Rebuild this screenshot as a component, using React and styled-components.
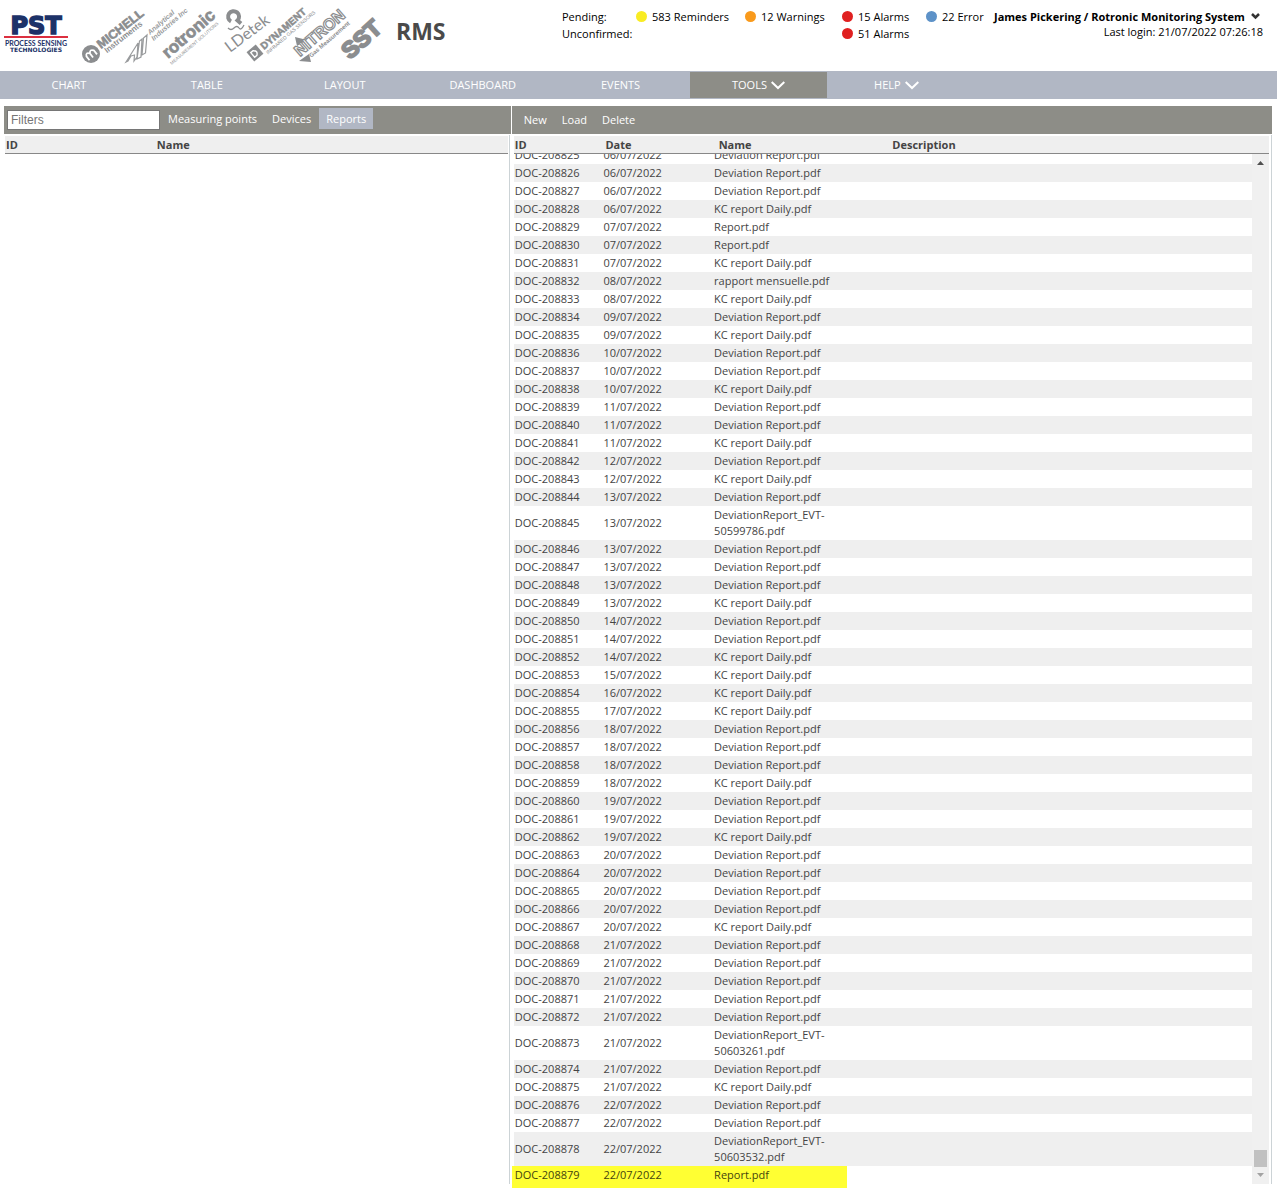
import React, { useEffect, useRef, useState } from "react";
import styled, { createGlobalStyle } from "styled-components";

const GlobalStyle = createGlobalStyle`
  * {
    box-sizing: border-box;
  }
  body {
    margin: 0;
    background: #fff;
    color: #444;
    font-family: "Open Sans", "Noto Sans", sans-serif;
    font-size: 11px;
  }
  button, input {
    font: inherit;
  }
`;

const Page = styled.div`
  display: flex;
  flex-direction: column;
  height: 100vh;
`;

const Header = styled.header`
  display: flex;
  align-items: flex-start;
  height: 71px;
  padding: 0 14px 0 4px;
  color: #000;
`;

const Brand = styled.div`
  display: flex;
  align-items: flex-start;
`;

const AppName = styled.h1`
  margin: 15px 0 0 8px;
  font-size: 23px;
  line-height: 32px;
  font-weight: 700;
  color: #4a4a4a;
`;

const Status = styled.div`
  display: grid;
  grid-template-columns: 74px 109px 97px 84px 68px;
  grid-auto-rows: 17px;
  margin: 8px 0 0 auto;
  line-height: 17px;
  white-space: nowrap;
`;

const StatusItem = styled.div`
  grid-column: ${(p) => p.$col};
  grid-row: ${(p) => p.$row};
  display: flex;
  align-items: center;
  gap: 5px;
`;

const Dot = styled.span`
  width: 11px;
  height: 11px;
  border-radius: 50%;
  background: ${(p) => p.$color};
`;

const User = styled.div`
  display: flex;
  flex-direction: column;
  min-width: 269px;
  margin-top: 8px;
  white-space: nowrap;
`;

const UserButton = styled.button`
  display: flex;
  align-items: center;
  justify-content: space-between;
  padding: 0 3px 0 0;
  border: none;
  background: none;
  font-weight: 700;
  line-height: 17px;
  color: #000;
  cursor: pointer;
`;

const LastLogin = styled.span`
  line-height: 14px;
  text-align: right;
`;

const Nav = styled.nav`
  display: flex;
  flex-shrink: 0;
  height: 28px;
  padding: 1px 0;
  background: #b1b7c4;
`;

const NavLink = styled.a`
  display: flex;
  align-items: center;
  justify-content: center;
  gap: 4px;
  width: 10.8%;
  padding-bottom: 2px;
  background: ${(p) => (p.$active ? "#8d8d87" : "transparent")};
  color: #fff;
  text-decoration: none;

  svg {
    margin-top: 3px;
  }
`;

const Main = styled.main`
  display: grid;
  grid-template-columns: 2fr 3fr;
  gap: 1px;
  flex: 1;
  min-height: 0;
  padding: 7px 5px 7px 4px;
`;

const Pane = styled.section`
  position: relative;
  display: flex;
  flex-direction: column;
  min-width: 0;
  min-height: 0;
`;

const Toolbar = styled.div`
  display: flex;
  align-items: flex-start;
  gap: 1px;
  flex-shrink: 0;
  height: 28px;
  padding: ${(p) => (p.$actions ? "3px 5px" : "2px 3px")};
  background: #8d8d87;
`;

const FilterInput = styled.input`
  width: 153px;
  height: 20px;
  margin-top: 2px;
  padding: 0 3px;
  border: 1px solid #767676;
  font-family: "Liberation Sans", Arial, sans-serif;
  font-size: 12px;
  &::placeholder {
    color: #757575;
  }
`;

const ToolButton = styled.button`
  height: 21px;
  padding: 0 7px;
  border: none;
  background: ${(p) => (p.$active ? "#b1b7c4" : "transparent")};
  color: #fff;
  white-space: nowrap;
  cursor: pointer;
`;

const PaneBody = styled.div`
  display: flex;
  flex-direction: column;
  flex: 1;
  min-height: 0;
  margin: 1px ${(p) => (p.$left ? "1px" : "0")} 0 0;
  padding: 1px ${(p) => (p.$left ? "1px" : "2px")} 0 ${(p) => (p.$left ? "1px" : "2px")};
  border-right: 1px solid #ccd3d6;
`;

const HeadTable = styled.table`
  width: 100%;
  flex-shrink: 0;
  table-layout: fixed;
  border-collapse: collapse;
  border-bottom: 1px solid #888;
  background: #efefef;
`;

const HeadCell = styled.th`
  width: ${(p) => p.$width};
  height: 17px;
  padding: 0 1px;
  line-height: 17px;
  text-align: left;
  font-weight: 700;
`;

const Scroller = styled.div`
  display: flex;
  flex: 1;
  min-height: 0;
`;

const Rows = styled.div`
  flex: 1;
  overflow-y: auto;
  scrollbar-width: none;
`;

const DocTable = styled.table`
  width: 100%;
  table-layout: fixed;
  border-collapse: collapse;
`;

const DocRow = styled.tr`
  background: ${(p) => (p.$shaded ? "#efefef" : "#fff")};
`;

const Cell = styled.td`
  padding: 1px;
  line-height: 16px;
  vertical-align: middle;
`;

const NameText = styled.span`
  display: block;
  max-width: 128px;
`;

const Highlight = styled.div`
  position: absolute;
  left: 0;
  bottom: -4px;
  width: 335px;
  height: 22px;
  background: #ffff33;
  mix-blend-mode: multiply;
  pointer-events: none;
`;

const Track = styled.div`
  display: flex;
  flex-direction: column;
  align-items: center;
  width: 17px;
  padding: 7px 0;
  background: #f0f0f0;
`;

const Thumb = styled.div`
  width: 13px;
  height: 17px;
  margin: auto 0 6px;
  background: #c1c1c1;
`;

const NAV = [
  { label: "CHART" },
  { label: "TABLE" },
  { label: "LAYOUT" },
  { label: "DASHBOARD" },
  { label: "EVENTS" },
  { label: "TOOLS", menu: true, active: true },
  { label: "HELP", menu: true },
];

const STATUS = [
  { col: 2, row: 1, color: "#f9ec23", text: "583 Reminders" },
  { col: 3, row: 1, color: "#f99a1c", text: "12 Warnings" },
  { col: 4, row: 1, color: "#e02020", text: "15 Alarms" },
  { col: 4, row: 2, color: "#e02020", text: "51 Alarms" },
  { col: 5, row: 1, color: "#5d92c8", text: "22 Error" },
];

const COLUMNS = [
  ["ID", "12%"],
  ["Date", "15%"],
  ["Name", "23%"],
  ["Description", "50%"],
];

const FIRST_ID = 208825;
const D = "Deviation Report.pdf";
const K = "KC report Daily.pdf";
const R = "Report.pdf";

// documents per day of July 2022, in id order
const DAYS = [
  ["06", [D, D, D, K]],
  ["07", [R, R, K]],
  ["08", ["rapport mensuelle.pdf", K]],
  ["09", [D, K]],
  ["10", [D, D, K]],
  ["11", [D, D, K]],
  ["12", [D, K]],
  ["13", [D, "DeviationReport_EVT-50599786.pdf", D, D, D, K]],
  ["14", [D, D, K]],
  ["15", [K]],
  ["16", [K]],
  ["17", [K]],
  ["18", [D, D, D, K]],
  ["19", [D, D, K]],
  ["20", [D, D, D, D, K]],
  ["21", [D, D, D, D, D, "DeviationReport_EVT-50603261.pdf", D, K]],
  ["22", [D, D, "DeviationReport_EVT-50603532.pdf", R]],
];

const DOCS = DAYS.flatMap(([day, names]) =>
  names.map((name) => ({ date: `${day}/07/2022`, name }))
).map((doc, i) => ({ ...doc, id: `DOC-${FIRST_ID + i}` }));

const PstLogo = () => (
  <svg width="66" height="66" viewBox="0 0 66 66" role="img" aria-label="PST Process Sensing Technologies">
    <g fill="#1d3268" fontFamily="DejaVu Sans, sans-serif" fontWeight="700" textAnchor="middle">
      <text x="32" y="34" fontSize="24" stroke="#1d3268" strokeWidth="1.5">
        PST
      </text>
      <text x="32" y="46" fontSize="7" fontFamily="Lato, sans-serif">
        PROCESS SENSING
      </text>
      <text x="32" y="52" fontSize="6">
        TECHNOLOGIES
      </text>
    </g>
    <rect x="0" y="36" width="64" height="2" fill="#dc3040" />
  </svg>
);

const PartnerLogos = () => (
  <svg width="318" height="70" viewBox="70 0 318 70" role="img" aria-label="Partner brands">
    <g fill="#8b8d8f" fontFamily="Liberation Sans, sans-serif" fontWeight="700">
      <circle cx="91" cy="54" r="9" />
      <path
        d="M86 58 V53 Q88 49 90.5 53 V58 M90.5 53 Q93 49 95.5 53 V58"
        transform="rotate(-38 91 54)"
        fill="none"
        stroke="#fff"
        strokeWidth="1.8"
      />
      <g transform="translate(101 49) rotate(-38)">
        <text fontSize="12.5" stroke="#8b8d8f" strokeWidth="0.6">MICHELL</text>
        <text x="2" y="7" fontSize="8">Instruments</text>
      </g>

      {/* slanted A and two bars */}
      <path
        d="M126 62 L138 43 L137 57 L134 61 L134.5 55 L131 56 L128 61 Z M137 59 L139.5 41 L142 39 L141 57 Z M142 55 L143.5 38 L147 35 L145.5 53 Z"
        fill="none"
        stroke="#999b9d"
        strokeWidth="1.2"
      />
      <g transform="translate(150 35) rotate(-41)" fill="#999b9d">
        <text fontSize="7" fontStyle="italic">Analytical</text>
        <text x="-1" y="7" fontSize="7" fontStyle="italic">Industries Inc</text>
      </g>

      <g transform="translate(168 59) rotate(-41)">
        <text fontSize="17" stroke="#8b8d8f" strokeWidth="0.7">rotronic</text>
        <text x="-1" y="7" fontSize="4.5" fontWeight="400">MEASUREMENT SOLUTIONS</text>
      </g>

      <path
        d="M231 21.5 A5.5 5.5 0 1 1 237.5 20.5 L241 23.5"
        fill="none"
        stroke="#8b8d8f"
        strokeWidth="4"
      />
      <path d="M228 28 Q231 31 234 28 T239 28 T244 25" fill="none" stroke="#8b8d8f" strokeWidth="1.3" />
      <text transform="translate(230 53) rotate(-37)" fontFamily="Lato" fontSize="16" fontWeight="400">
        LDetek
      </text>

      <g transform="translate(255 53) rotate(-40)">
        <rect x="-6" y="-6" width="12" height="12" />
        <path d="M-3 -3 H0 Q4 0 0 3 H-3 Z" fill="none" stroke="#fff" strokeWidth="1.4" />
      </g>
      <g transform="translate(264 50) rotate(-41)">
        <text fontSize="10" stroke="#8b8d8f" strokeWidth="0.5">DYNAMENT</text>
        <text x="0" y="6" fontSize="5" fontWeight="400">INFRARED GAS SENSORS</text>
      </g>

      <path d="M295 37 L307 40 L297 46 Z M299 61 L309 54 L311 62 Z" />
      <g transform="translate(300 57) rotate(-41)">
        <text fontSize="16" fill="#fff" stroke="#8b8d8f" strokeWidth="1.2">NITRON</text>
        <text x="8" y="8" fontSize="6">Gas Measurement</text>
      </g>

      <text
        transform="translate(350 60) rotate(-42)"
        fontSize="23"
        stroke="#8b8d8f"
        strokeWidth="2"
      >
        SST
      </text>
    </g>
  </svg>
);

const MenuArrow = () => (
  <svg width="14" height="9" viewBox="0 0 14 9" fill="none" stroke="#fff" strokeWidth="2" aria-hidden="true">
    <path d="M0.7 1 L7 7 L13.3 1" />
  </svg>
);

const App = () => {
  const [filter, setFilter] = useState("");
  const rowsRef = useRef(null);

  // newest documents are at the end of the list
  useEffect(() => {
    rowsRef.current.scrollTop = rowsRef.current.scrollHeight;
  }, []);

  return (
    <Page>
      <GlobalStyle />
      <Header>
        <Brand>
          <PstLogo />
          <PartnerLogos />
          <AppName>RMS</AppName>
        </Brand>
        <Status>
          <StatusItem $col={1} $row={1}>Pending:</StatusItem>
          <StatusItem $col={1} $row={2}>Unconfirmed:</StatusItem>
          {STATUS.map((s) => (
            <StatusItem key={s.text} $col={s.col} $row={s.row}>
              <Dot $color={s.color} />
              {s.text}
            </StatusItem>
          ))}
        </Status>
        <User>
          <UserButton type="button">
            James Pickering / Rotronic Monitoring System
            <svg width="9" height="7" viewBox="0 0 9 7" fill="none" stroke="#333" strokeWidth="2.5" aria-hidden="true">
              <path d="M1 1 L4.5 4.5 L8 1" />
            </svg>
          </UserButton>
          <LastLogin>Last login: 21/07/2022 07:26:18</LastLogin>
        </User>
      </Header>
      <Nav>
        {NAV.map((item) => (
          <NavLink key={item.label} href="#" $active={item.active}>
            {item.label}
            {item.menu && <MenuArrow />}
          </NavLink>
        ))}
      </Nav>
      <Main>
        <Pane>
          <Toolbar>
            <FilterInput
              aria-label="Filters"
              placeholder="Filters"
              value={filter}
              onChange={(e) => setFilter(e.target.value)}
            />
            <ToolButton type="button">Measuring points</ToolButton>
            <ToolButton type="button">Devices</ToolButton>
            <ToolButton type="button" $active>Reports</ToolButton>
          </Toolbar>
          <PaneBody $left>
            <HeadTable>
              <thead>
                <tr>
                  <HeadCell $width="30%">ID</HeadCell>
                  <HeadCell $width="70%">Name</HeadCell>
                </tr>
              </thead>
            </HeadTable>
          </PaneBody>
        </Pane>
        <Pane>
          <Toolbar $actions>
            <ToolButton type="button">New</ToolButton>
            <ToolButton type="button">Load</ToolButton>
            <ToolButton type="button">Delete</ToolButton>
          </Toolbar>
          <PaneBody>
            <HeadTable>
              <thead>
                <tr>
                  {COLUMNS.map(([label, width]) => (
                    <HeadCell key={label} $width={width}>{label}</HeadCell>
                  ))}
                </tr>
              </thead>
            </HeadTable>
            <Scroller>
              <Rows ref={rowsRef}>
                <DocTable>
                  <colgroup>
                    {COLUMNS.map(([label, width]) => (
                      <col key={label} width={width} />
                    ))}
                  </colgroup>
                  <tbody>
                    {DOCS.map((doc, i) => (
                      <DocRow key={doc.id} $shaded={i % 2 === 1}>
                        <Cell>{doc.id}</Cell>
                        <Cell>{doc.date}</Cell>
                        <Cell>
                          <NameText>{doc.name}</NameText>
                        </Cell>
                        <Cell />
                      </DocRow>
                    ))}
                  </tbody>
                </DocTable>
              </Rows>
              <Track>
                <svg width="7" height="4" viewBox="0 0 7 4" aria-hidden="true">
                  <path d="M0 4 L3.5 0 L7 4 Z" fill="#505050" />
                </svg>
                <Thumb />
                <svg width="7" height="4" viewBox="0 0 7 4" aria-hidden="true">
                  <path d="M0 0 L3.5 4 L7 0 Z" fill="#a3a3a3" />
                </svg>
              </Track>
            </Scroller>
          </PaneBody>
          <Highlight />
        </Pane>
      </Main>
    </Page>
  );
};

export default App;
